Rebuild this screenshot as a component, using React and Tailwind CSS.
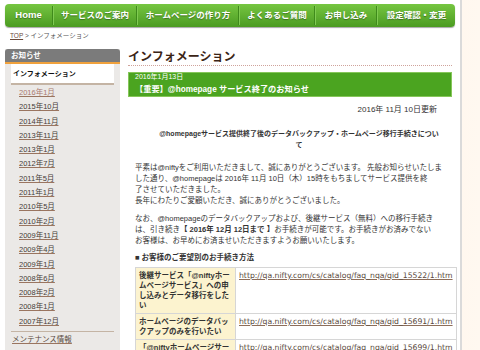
import React from "react";

const navItems = [
  { label: "Home", w: "w-[47px]", home: true },
  { label: "サービスのご案内", w: "w-[82px]" },
  { label: "ホームページの作り方", w: "w-[100px]" },
  { label: "よくあるご質問", w: "w-[74px]" },
  { label: "お申し込み", w: "w-[60px]" },
  { label: "設定確認・変更", w: "w-[77px]" },
];

const months = [
  "2016年1月",
  "2015年10月",
  "2014年11月",
  "2013年11月",
  "2013年1月",
  "2012年7月",
  "2011年5月",
  "2011年1月",
  "2010年5月",
  "2010年2月",
  "2009年11月",
  "2009年4月",
  "2009年1月",
  "2008年6月",
  "2008年2月",
  "2008年1月",
  "2007年12月",
];

const rows = [
  {
    lines: ["後継サービス「@niftyホー", "ムページサービス」への申", "し込みとデータ移行をした", "い"],
    url: "http://qa.nifty.com/cs/catalog/faq_nqa/qid_15522/1.htm",
  },
  {
    lines: ["ホームページのデータバッ", "クアップのみを行いたい"],
    url: "http://qa.nifty.com/cs/catalog/faq_nqa/qid_15691/1.htm",
  },
  {
    lines: ["「@niftyホームページサー", "ビス」へのお申し込み"],
    url: "http://qa.nifty.com/cs/catalog/faq_nqa/qid_15699/1.htm",
  },
];

export default function App() {
  return (
    <div className="w-[480px] h-[350px] overflow-hidden flex bg-gradient-to-r from-[#fde8d2] to-[#fff8f0] font-['Liberation_Sans','Noto_Sans_CJK_JP',sans-serif] text-[#333]">
      <div className="w-[462px] shrink-0 h-full bg-white border-r-2 border-[#dadada] flex flex-col">
        <nav className="mx-[5px] mt-[4px] h-[23px] shrink-0 rounded-[4px] bg-gradient-to-b from-[#76c641] to-[#4b9b21] shadow-[0_1px_1px_rgba(0,0,0,0.35)] flex items-center">
          {navItems.map((it, i) => (
            <React.Fragment key={it.label}>
              {i > 0 && (
                <div className="w-[2px] h-[19px] flex">
                  <div className="w-[1px] h-full bg-[#3f8a1b]" />
                  <div className="w-[1px] h-full bg-[#80cb52]" />
                </div>
              )}
              <div
                className={`${it.w} flex justify-center items-center text-white font-bold [text-shadow:0_1px_1px_rgba(0,0,0,0.35)] ${
                  it.home ? "text-[9.5px]" : "text-[8.5px]"
                }`}
              >
                {it.label}
              </div>
            </React.Fragment>
          ))}
        </nav>

        <div className="ml-[10px] mt-[4px] h-[10px] shrink-0 leading-[10px] text-[6.5px] text-[#555]">
          <span className="underline text-[#6b4a3a]">TOP</span> &gt; インフォメーション
        </div>

        <div className="flex mt-[8px] flex-1">
          <aside className="w-[115px] ml-[5px] bg-[#ebe9e7] flex flex-col">
            <div className="h-[15px] rounded-t-[3px] bg-[#7b7b7b] border-b-2 border-[#f0a13c] text-white font-bold text-[7.5px] leading-[13px] pl-[6px]">
              お知らせ
            </div>
            <div className="mx-[6px] h-[21px] bg-white border-b-2 border-[#c4b4a4] text-[7px] font-bold leading-[19px] pl-[2px] text-[#111]">
              インフォメーション
            </div>
            <ul className="pt-[1px] pl-[14px]">
              {months.map((m, i) => (
                <li key={m} className="h-[14.3px] leading-[14.3px] text-[7.5px]">
                  <span
                    className={`underline decoration-[#9a7560] ${
                      i === 0 ? "text-[#a8786e]" : "text-[#463c37]"
                    }`}
                  >
                    {m}
                  </span>
                </li>
              ))}
            </ul>
            <div className="mx-[6px] mt-[2px] border-t border-[#c4b4a4]" />
            <div className="pl-[7px] mt-[1px] leading-[14px] text-[7.5px]">
              <span className="underline text-[#5a4a40] decoration-[#9a7560]">メンテナンス情報</span>
            </div>
          </aside>

          <main className="ml-[8px] w-[329px] flex flex-col">
            <h1 className="w-[324px] text-[12px] leading-[16px] font-bold text-[#3b2416] border-b border-dotted border-[#cfa39b]">
              インフォメーション
            </h1>
            <div className="mt-[6px] w-[324px] bg-[#4ba420] border border-[#86c65a] text-white pl-[6px]">
              <div className="text-[7px] leading-[8px]">2016年1月13日</div>
              <div className="mt-[3px] text-[8.2px] leading-[12px] font-bold">【重要】@homepage サービス終了のお知らせ</div>
            </div>
            <div className="mt-[7px] text-[8px] leading-[12px] text-right pr-[20px] text-[#333]">
              2016年 11月 10日更新
            </div>
            <div className="mt-[11.5px] pl-[13px] text-center font-bold text-[7px] leading-[11px] whitespace-nowrap">
              @homepageサービス提供終了後のデータバックアップ・ホームページ移行手続きについ
              <br />て
            </div>
            <p className="mt-[12px] pl-[7px] text-[7.5px] leading-[11px] whitespace-nowrap">
              平素は@niftyをご利用いただきまして、誠にありがとうございます。 先般お知らせいたしま
              <br />
              した通り、@homepageは 2016年 11月 10日（木）15時をもちましてサービス提供を終
              <br />
              了させていただきました。
              <br />
              長年にわたりご愛顧いただき、誠にありがとうございました。
            </p>
            <p className="mt-[7px] pl-[7px] text-[7.5px] leading-[11px] whitespace-nowrap">
              なお、@homepageのデータバックアップおよび、後継サービス（無料）への移行手続き
              <br />
              は、引き続き<span className="font-bold">【 2016年 12月 12日まで 】</span>お手続きが可能です。お手続きがお済みでない
              <br />
              お客様は、お早めにお済ませいただきますようお願いいたします。
            </p>
            <div className="mt-[6px] pl-[7px] font-bold text-[7.5px] leading-[11px]">■ お客様のご要望別のお手続き方法</div>
            <table className="mt-[4.5px] ml-[7px] w-[322px] border-collapse text-[7.5px]">
              <tbody>
                {rows.map((r) => (
                  <tr key={r.url}>
                    <td className="w-[100px] align-top bg-[#fcf3cf] border border-[#d6d6d6] px-[3px] py-[2.5px] font-bold leading-[10px] whitespace-nowrap">
                      {r.lines.map((l, i) => (
                        <div key={i}>{l}</div>
                      ))}
                    </td>
                    <td className="align-top border border-[#d6d6d6] px-[3px] py-[2.5px] leading-[10px] whitespace-nowrap text-[7.7px] font-['DejaVu_Sans',sans-serif]">
                      <span className="underline text-[#5b4b3e] decoration-[#8d6e5a]">{r.url}</span>
                    </td>
                  </tr>
                ))}
              </tbody>
            </table>
          </main>
        </div>
      </div>
    </div>
  );
}
